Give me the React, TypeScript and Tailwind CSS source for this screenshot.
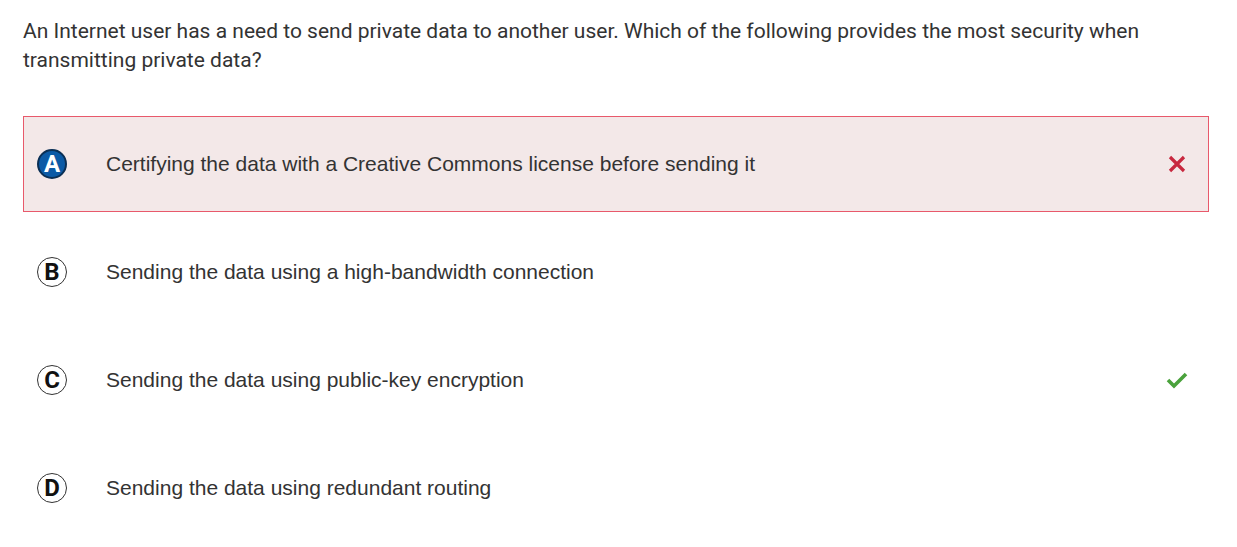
import React from "react";

const options = [
  { letter: "A", text: "Certifying the data with a Creative Commons license before sending it", selected: true, mark: "wrong" },
  { letter: "B", text: "Sending the data using a high-bandwidth connection", selected: false, mark: null },
  { letter: "C", text: "Sending the data using public-key encryption", selected: false, mark: "right" },
  { letter: "D", text: "Sending the data using redundant routing", selected: false, mark: null },
];

function Cross() {
  return (
    <svg width="18" height="18" viewBox="0 0 18 18">
      <path d="M2 2 L16 16 M16 2 L2 16" stroke="#c8283f" strokeWidth="3.2" strokeLinecap="butt" />
    </svg>
  );
}

function Check() {
  return (
    <svg width="22" height="18" viewBox="0 0 22 18">
      <path d="M2 9 L8 15 L20 3" stroke="#4aa23c" strokeWidth="3.6" fill="none" />
    </svg>
  );
}

export default function App() {
  return (
    <div className="bg-white w-[1237px] h-[547px] px-[23px] pt-[17px] text-[#333333]">
      <p className="font-['Roboto',sans-serif] text-[21px] leading-[29px] text-[#333333] pr-[60px]">
        An Internet user has a need to send private data to another user. Which of the following provides the most security when transmitting private data?
      </p>
      <div className="mt-[41px] flex flex-col gap-[12px] w-[1186px]">
        {options.map((o) => (
          <div
            key={o.letter}
            className={
              "h-[96px] flex items-center border pl-[13px] pr-[20px] " +
              (o.selected ? "border-[#e8596b] bg-[#f3e8e8]" : "border-transparent")
            }
          >
            <div
              className={
                "w-[30px] h-[30px] rounded-full flex items-center justify-center font-['Roboto',sans-serif] font-bold text-[24px] leading-none " +
                (o.selected
                  ? "bg-[#0b5aa6] border-2 border-[#0a2f55] text-white"
                  : "border border-[#333333] text-[#111111] bg-white")
              }
            >
              {o.letter}
            </div>
            <div className="ml-[39px] flex-1 font-['Liberation_Sans',Arial,sans-serif] text-[21px] text-[#333333]">
              {o.text}
            </div>
            <div className="w-[22px] flex items-center justify-center">
              {o.mark === "wrong" && <Cross />}
              {o.mark === "right" && <Check />}
            </div>
          </div>
        ))}
      </div>
    </div>
  );
}
